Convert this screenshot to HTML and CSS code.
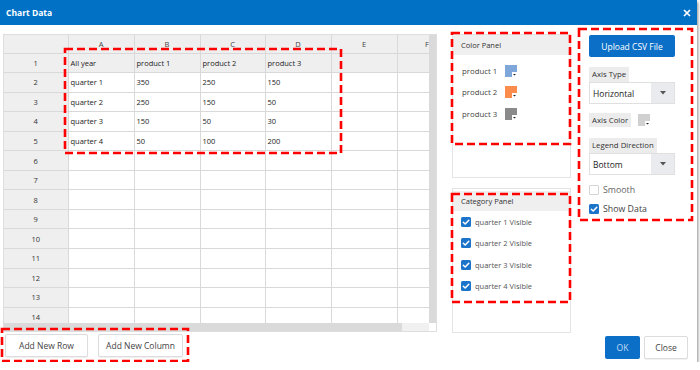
FILE: index.html
```html
<!DOCTYPE html>
<html lang="en">
<head>
  <meta charset="UTF-8">
  <title>Chart Data</title>
  <meta name="viewport" content="width=device-width, initial-scale=1.0">
  <link rel="stylesheet" href="styles.css">
</head>
<body>

  <div class="dialog">
    <div class="titlebar">
      <span class="title">Chart Data</span>
      <svg class="close-x" width="8" height="8" viewBox="0 0 8 8"><path d="M1 1L7 7M7 1L1 7"/></svg>
    </div>

    <div class="main">
      <!-- spreadsheet -->
      <div class="sheet">
        <div class="sheet-view">
          <table class="grid">
            <colgroup>
              <col class="c-head"><col class="c-a"><col class="c-a"><col class="c-c"><col class="c-a"><col class="c-a"><col class="c-f">
            </colgroup>
            <tr class="letters"><th></th><th>A</th><th>B</th><th>C</th><th>D</th><th>E</th><th>F</th></tr>
            <tr class="first"><th>1</th><td>All year</td><td>product 1</td><td>product 2</td><td>product 3</td><td></td><td></td></tr>
            <tr><th>2</th><td>quarter 1</td><td>350</td><td>250</td><td>150</td><td></td><td></td></tr>
            <tr><th>3</th><td>quarter 2</td><td>250</td><td>150</td><td>50</td><td></td><td></td></tr>
            <tr><th>4</th><td>quarter 3</td><td>150</td><td>50</td><td>30</td><td></td><td></td></tr>
            <tr><th>5</th><td>quarter 4</td><td>50</td><td>100</td><td>200</td><td></td><td></td></tr>
            <tr><th>6</th><td></td><td></td><td></td><td></td><td></td><td></td></tr>
            <tr><th>7</th><td></td><td></td><td></td><td></td><td></td><td></td></tr>
            <tr><th>8</th><td></td><td></td><td></td><td></td><td></td><td></td></tr>
            <tr><th>9</th><td></td><td></td><td></td><td></td><td></td><td></td></tr>
            <tr><th>10</th><td></td><td></td><td></td><td></td><td></td><td></td></tr>
            <tr><th>11</th><td></td><td></td><td></td><td></td><td></td><td></td></tr>
            <tr><th>12</th><td></td><td></td><td></td><td></td><td></td><td></td></tr>
            <tr><th>13</th><td></td><td></td><td></td><td></td><td></td><td></td></tr>
            <tr><th>14</th><td></td><td></td><td></td><td></td><td></td><td></td></tr>
          </table>
        </div>
        <div class="vbar"></div>
        <div class="hbar"><div class="hthumb"></div></div>
        <div class="corner"></div>
        <div class="mark mark-cells"><svg><rect width="100%" height="100%"/></svg></div>
      </div>

      <!-- colour + category panels -->
      <div class="panels">
        <div class="panel color-panel">
          <div class="panel-head">Color Panel</div>
          <div class="color-list">
            <div class="color-row">
              <span>product 1</span>
              <svg class="swatch" width="12" height="12" viewBox="0 0 12 12"><rect width="12" height="12" fill="#7fa7d9"/><rect x="7" y="7" width="5" height="5" fill="#fff"/><path d="M8 9h3l-1.5 1.6z" fill="#222"/></svg>
            </div>
            <div class="color-row">
              <span>product 2</span>
              <svg class="swatch" width="12" height="12" viewBox="0 0 12 12"><rect width="12" height="12" fill="#fb8c4c"/><rect x="7" y="7" width="5" height="5" fill="#fff"/><path d="M8 9h3l-1.5 1.6z" fill="#222"/></svg>
            </div>
            <div class="color-row">
              <span>product 3</span>
              <svg class="swatch" width="12" height="12" viewBox="0 0 12 12"><rect width="12" height="12" fill="#8a8a8a"/><rect x="7" y="7" width="5" height="5" fill="#fff"/><path d="M8 9h3l-1.5 1.6z" fill="#222"/></svg>
            </div>
          </div>
          <div class="mark mark-color"><svg><rect width="100%" height="100%"/></svg></div>
        </div>

        <div class="panel category-panel">
          <div class="panel-head">Category Panel</div>
          <label class="cat-row"><svg class="check" width="10" height="10" viewBox="0 0 10 10"><rect width="10" height="10" rx="1.5"/><path d="M2.3 5.2l1.9 1.8 3.6-3.8"/></svg>quarter 1 Visible</label>
          <label class="cat-row"><svg class="check" width="10" height="10" viewBox="0 0 10 10"><rect width="10" height="10" rx="1.5"/><path d="M2.3 5.2l1.9 1.8 3.6-3.8"/></svg>quarter 2 Visible</label>
          <label class="cat-row"><svg class="check" width="10" height="10" viewBox="0 0 10 10"><rect width="10" height="10" rx="1.5"/><path d="M2.3 5.2l1.9 1.8 3.6-3.8"/></svg>quarter 3 Visible</label>
          <label class="cat-row"><svg class="check" width="10" height="10" viewBox="0 0 10 10"><rect width="10" height="10" rx="1.5"/><path d="M2.3 5.2l1.9 1.8 3.6-3.8"/></svg>quarter 4 Visible</label>
          <div class="mark mark-category"><svg><rect width="100%" height="100%"/></svg></div>
        </div>
      </div>

      <!-- chart options -->
      <div class="options">
        <button class="btn-upload">Upload CSV File</button>

        <div class="chip chip-first">Axis Type</div>
        <div class="select">
          <span class="select-text">Horizontal</span>
          <span class="select-arrow"><svg width="6" height="4" viewBox="0 0 6 4"><path d="M0 0h6L3 3.5z"/></svg></span>
        </div>

        <div class="axis-color">
          <div class="chip">Axis Color</div>
          <svg class="swatch" width="12" height="12" viewBox="0 0 12 12"><rect width="12" height="12" fill="#d0d0d0"/><rect x="7" y="7" width="5" height="5" fill="#fff"/><path d="M8 9h3l-1.5 1.6z" fill="#222"/></svg>
        </div>

        <div class="chip chip-legend">Legend Direction</div>
        <div class="select">
          <span class="select-text">Bottom</span>
          <span class="select-arrow"><svg width="6" height="4" viewBox="0 0 6 4"><path d="M0 0h6L3 3.5z"/></svg></span>
        </div>

        <label class="opt-row opt-smooth"><span class="box"></span>Smooth</label>
        <label class="opt-row opt-show"><svg class="check" width="10" height="10" viewBox="0 0 10 10"><rect width="10" height="10" rx="1.5"/><path d="M2.3 5.2l1.9 1.8 3.6-3.8"/></svg>Show Data</label>

        <div class="mark mark-options"><svg><rect width="100%" height="100%"/></svg></div>
      </div>
    </div>

    <div class="footer">
      <div class="add-group">
        <button class="btn-plain btn-row">Add New Row</button>
        <button class="btn-plain btn-col">Add New Column</button>
        <div class="mark mark-add"><svg><rect width="100%" height="100%"/></svg></div>
      </div>
      <div class="dialog-actions">
        <button class="btn-ok">OK</button>
        <button class="btn-plain btn-close">Close</button>
      </div>
    </div>
  </div>

</body>
</html>
```
FILE: styles.css
```css
* {
  box-sizing: border-box;
}

body {
  margin: 0;
  background: #fff;
  font-family: 'Open Sans', 'Noto Sans', sans-serif;
  color: #333;
}

button {
  font-family: inherit;
  cursor: pointer;
  padding: 0;
}

.dialog {
  width: 697px;
  height: 362px;
  background: #fff;
  box-shadow: 1px 2px 3px rgba(0, 0, 0, 0.45);
}

.titlebar {
  height: 25px;
  background: #0071c5;
  display: flex;
  align-items: center;
  justify-content: space-between;
  padding: 0 6px 0 6px;
}

.title {
  color: #fff;
  font-size: 8.5px;
  font-weight: bold;
}

.close-x path {
  stroke: #fff;
  stroke-width: 1.7;
  fill: none;
}

.main {
  display: flex;
  align-items: flex-start;
  height: 309px;
  padding: 9px 0 0 3px;
}

/* annotation boxes drawn over the ui */
.mark {
  position: absolute;
  pointer-events: none;
}

.mark svg {
  display: block;
  width: 100%;
  height: 100%;
  overflow: visible;
}

.mark rect {
  fill: none;
  stroke: #ff0000;
  stroke-width: 2.6;
  stroke-dasharray: 8 4;
}

/* spreadsheet */
.sheet {
  position: relative;
  width: 434px;
  height: 298px;
  border: 1px solid #dedede;
  display: grid;
  grid-template-columns: 425px 7px;
  grid-template-rows: 288px 8px;
}

.sheet-view {
  overflow: hidden;
}

.grid {
  border-collapse: collapse;
  table-layout: fixed;
  width: 453px;
  font-size: 7.5px;
  color: #222;
}

.c-head { width: 64px; }
.c-a { width: 66px; }
.c-c { width: 65px; }
.c-f { width: 60px; }

.grid th,
.grid td {
  border: 1px solid #d9d9d9;
  height: 19.55px;
  padding: 0 0 0 2px;
  white-space: nowrap;
  overflow: hidden;
}

.grid tr:first-child th,
.grid tr:first-child td {
  border-top: none;
}

.grid th:first-child {
  border-left: none;
}

.grid th {
  background: #efefef;
  font-weight: normal;
  text-align: center;
  color: #333;
  padding: 0;
}

.grid .letters th {
  height: 18px;
  color: #444;
}

.grid .first td {
  background: #efefef;
}

.vbar {
  background: #dadada;
}

.hbar {
  background: #f1f1f1;
  display: flex;
}

.hthumb {
  width: 398px;
  background: #dadada;
}

.corner {
  background: #fff;
}

.mark-cells {
  left: 61px;
  top: 14px;
  width: 276px;
  height: 104px;
}

/* panels */
.panels {
  margin-left: 15px;
  width: 119px;
  display: flex;
  flex-direction: column;
  gap: 10px;
}

.panel {
  position: relative;
  border: 1px solid #e4e4e4;
}

.color-panel {
  height: 144px;
}

.category-panel {
  height: 145px;
}

.panel-head {
  background: #efefef;
  height: 20px;
  line-height: 20px;
  padding-left: 8px;
  font-size: 7.5px;
  color: #333;
}

.color-list {
  padding-top: 5px;
}

.color-row {
  display: flex;
  align-items: center;
  height: 21.5px;
  padding-left: 9px;
  font-size: 7.8px;
  color: #444;
}

.color-row .swatch {
  margin-left: 8px;
}

.category-panel .panel-head {
  margin-top: 2px;
  height: 20px;
}

.cat-row {
  display: flex;
  align-items: center;
  gap: 4px;
  height: 21.5px;
  padding-left: 8px;
  font-size: 7.5px;
  color: #555;
}

.check rect {
  fill: #1b74c9;
}

.check path {
  fill: none;
  stroke: #fff;
  stroke-width: 1.5;
  stroke-linecap: round;
  stroke-linejoin: round;
}

.mark-color {
  left: -1px;
  top: -2px;
  width: 118px;
  height: 111px;
}

.mark-category {
  left: -1px;
  top: 5px;
  width: 118px;
  height: 108px;
}

/* options column */
.options {
  position: relative;
  margin-left: 18px;
  width: 86px;
  display: flex;
  flex-direction: column;
  align-items: flex-start;
}

.btn-upload {
  margin-top: 1px;
  width: 86px;
  height: 22px;
  border: none;
  border-radius: 2px;
  background: #0b6fc8;
  color: #fff;
  font-size: 8.5px;
}

.chip {
  background: #ececec;
  font-size: 7.8px;
  color: #333;
  height: 15px;
  line-height: 15px;
  padding: 0 3px;
}

.chip-first {
  margin-top: 10px;
}

.chip-legend {
  margin-top: 11px;
}

.select {
  width: 86px;
  height: 22px;
  border: 1px solid #e0e0e0;
  display: flex;
  align-items: stretch;
  font-size: 8.5px;
  color: #222;
}

.select-text {
  flex: 1;
  display: flex;
  align-items: center;
  padding-left: 3px;
}

.select-arrow {
  width: 23px;
  background: #e9ebee;
  display: flex;
  align-items: center;
  justify-content: center;
}

.select-arrow path {
  fill: #555;
}

.axis-color {
  margin-top: 9px;
  display: flex;
  align-items: center;
  gap: 7px;
}

.axis-color .chip {
  height: 14px;
  line-height: 14px;
}

.opt-row {
  display: flex;
  align-items: center;
  gap: 4px;
  height: 10px;
  font-size: 8.8px;
  color: #555;
}

.opt-smooth {
  margin-top: 10px;
  color: #666;
}

.opt-show {
  margin-top: 9px;
  color: #444;
}

.box {
  width: 10px;
  height: 10px;
  border: 1px solid #d6d6d6;
  border-radius: 1px;
  background: #fff;
}

.mark-options {
  left: -10px;
  top: -5px;
  width: 113px;
  height: 191px;
}

/* footer */
.footer {
  display: flex;
  justify-content: space-between;
  align-items: flex-start;
  padding: 0 9px 0 5px;
}

.add-group {
  position: relative;
  display: flex;
  gap: 10px;
}

.btn-plain {
  height: 23px;
  background: #fff;
  border: 1px solid #dcdcdc;
  border-radius: 2px;
  color: #444;
  font-size: 8.5px;
  box-shadow: 0 1px 1px rgba(0, 0, 0, 0.06);
}

.btn-row {
  width: 83px;
}

.btn-col {
  width: 85px;
}

.mark-add {
  left: -3px;
  top: -5px;
  width: 186px;
  height: 32px;
}

.dialog-actions {
  display: flex;
  gap: 4px;
  margin-top: 2px;
}

.btn-ok {
  width: 35px;
  height: 23px;
  border: none;
  border-radius: 2px;
  background: #0b6fc8;
  color: #c5dcf2;
  font-size: 8.5px;
}

.btn-close {
  width: 44px;
}
```
